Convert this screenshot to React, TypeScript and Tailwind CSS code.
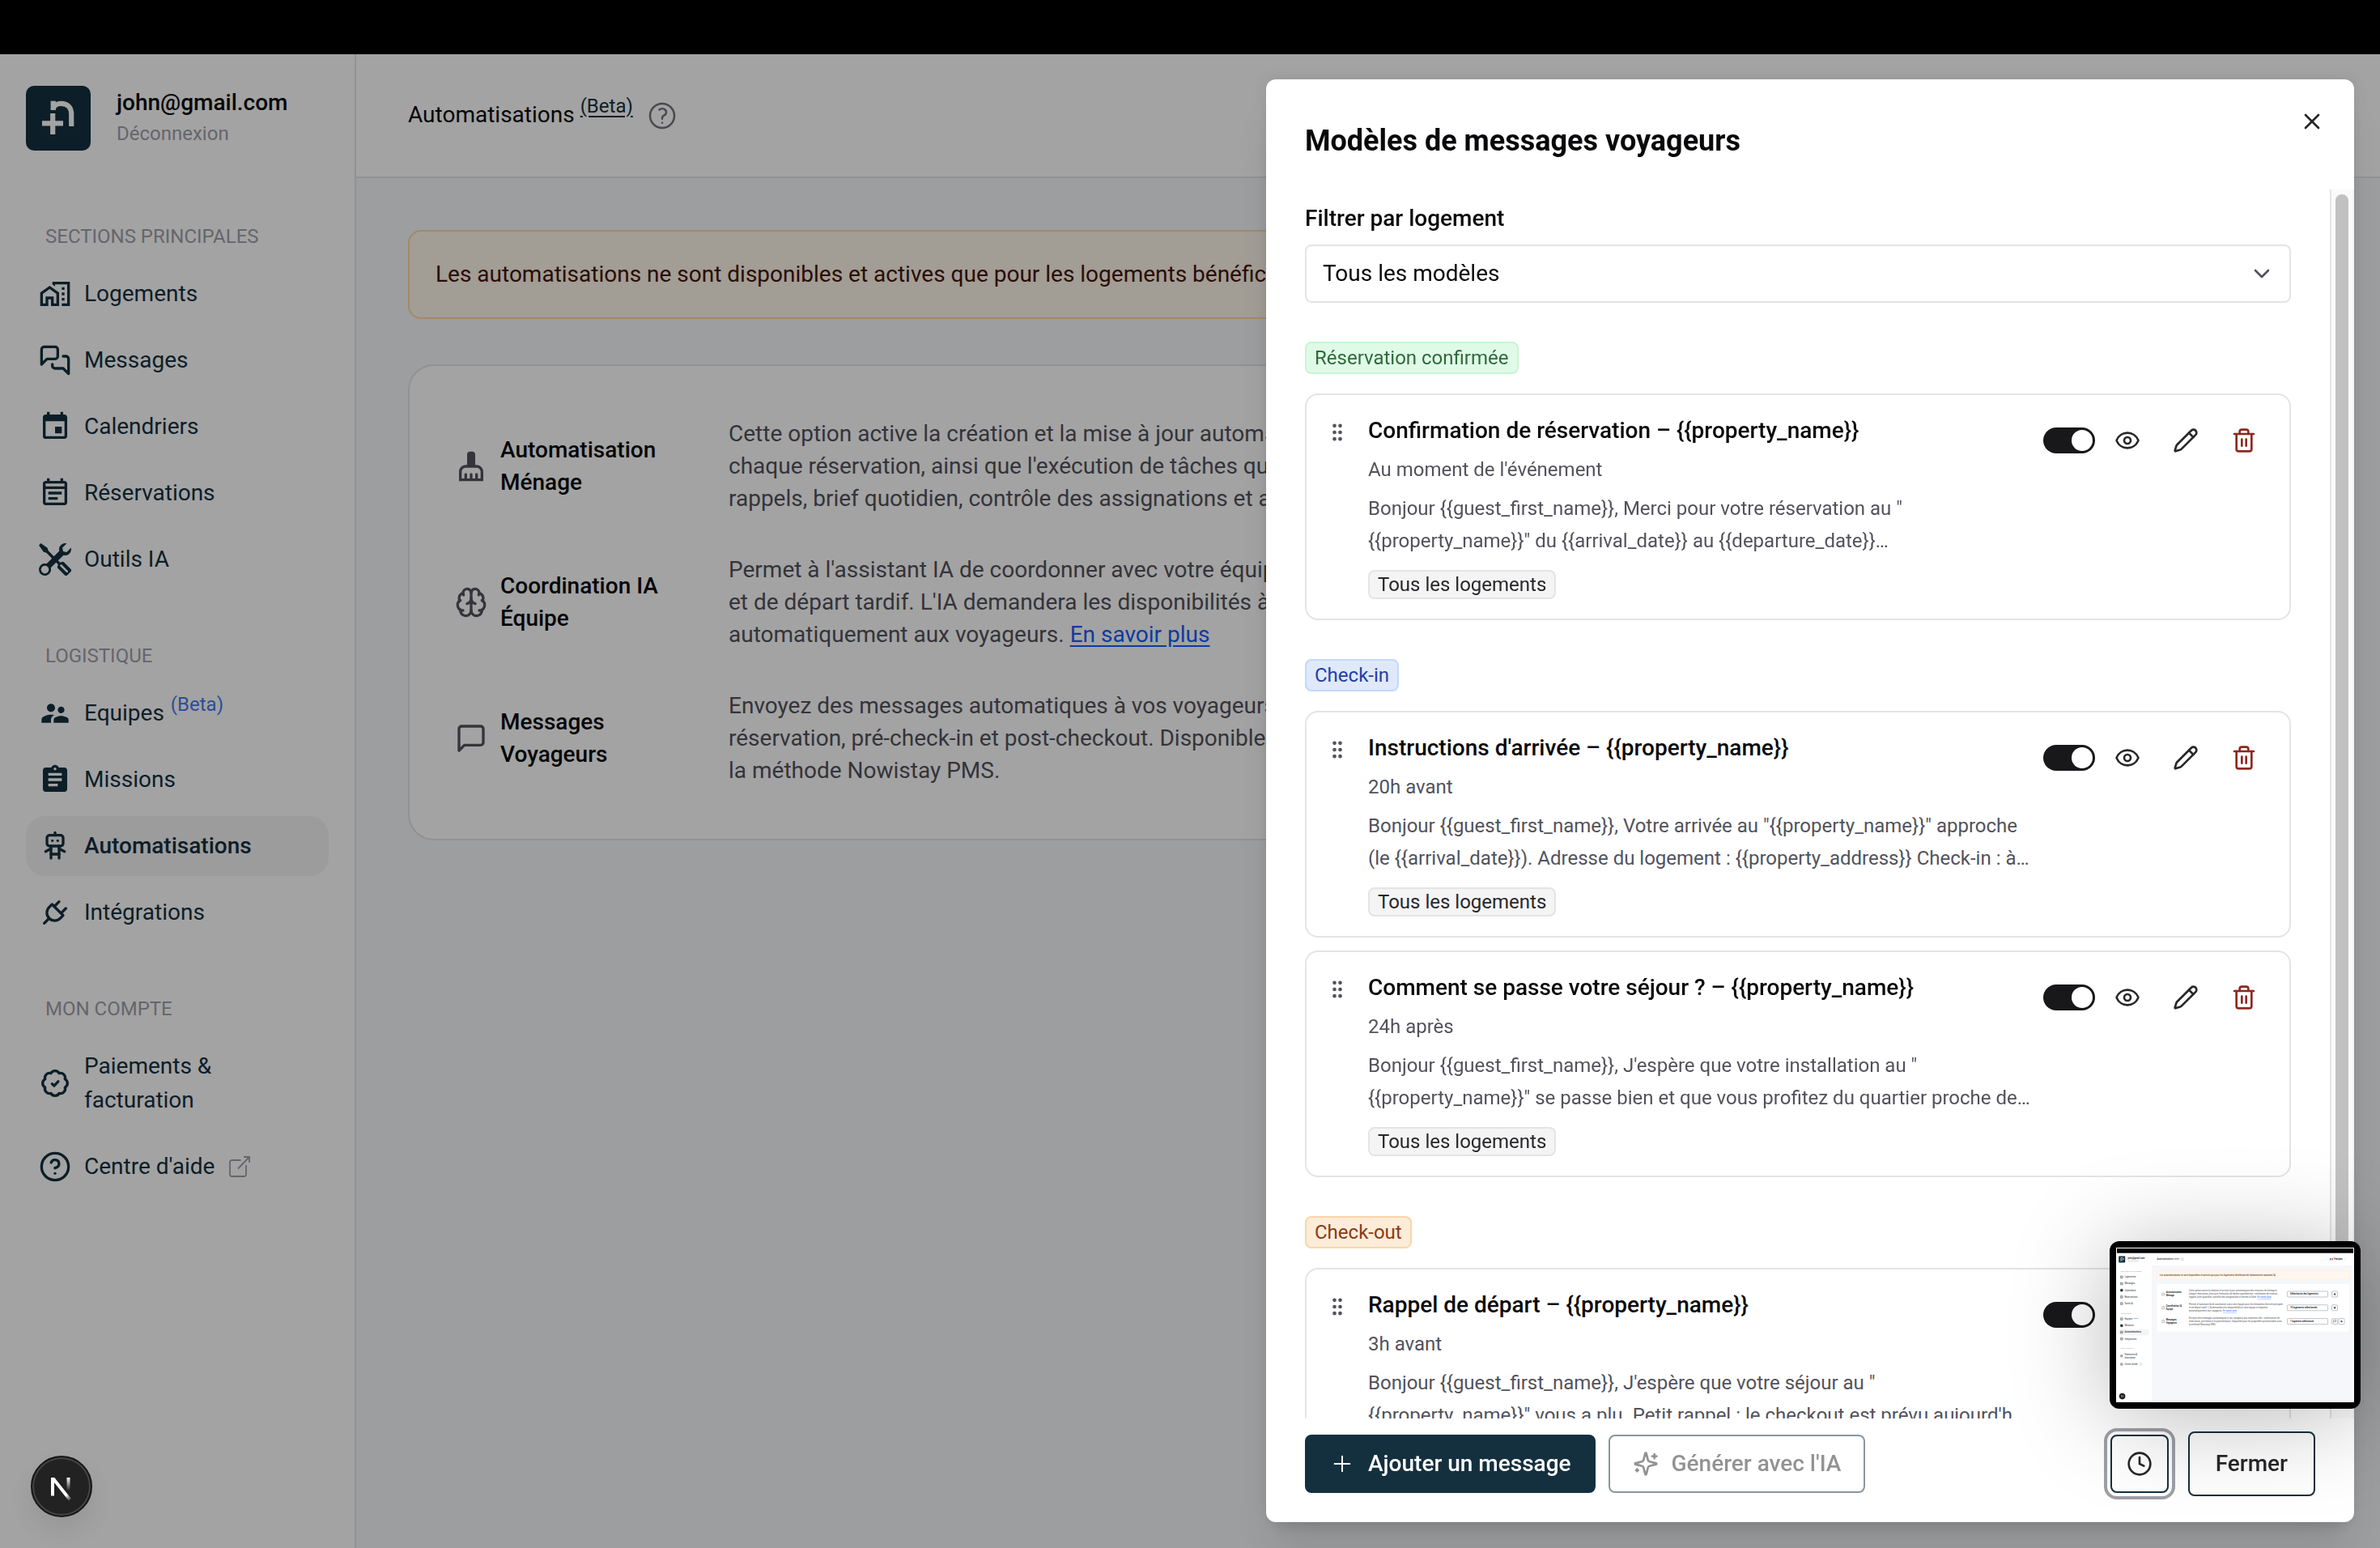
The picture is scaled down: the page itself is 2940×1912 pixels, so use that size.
import React from "react";
import {
  Brain,
  ChevronDown,
  CircleQuestionMark,
  Clock,
  Eye,
  GripVertical,
  Pencil,
  Plus,
  Trash2,
  X,
} from "lucide-react";
import {
  MdAssignment,
  MdEvent,
  MdOutlineEventNote,
  MdOutlineHomeWork,
  MdSupervisorAccount,
} from "react-icons/md";
import { BsTools } from "react-icons/bs";
import { TbPlug, TbRobot } from "react-icons/tb";
import { HiOutlineQuestionMarkCircle } from "react-icons/hi2";

type IconProps = { className?: string };

const stroke = {
  viewBox: "0 0 24 24",
  fill: "none",
  stroke: "currentColor",
  strokeWidth: 2,
  strokeLinecap: "round" as const,
  strokeLinejoin: "round" as const,
};

function ChatBubbles({ className }: IconProps) {
  return (
    <svg {...stroke} className={className} aria-hidden="true">
      <path d="M14 9a2 2 0 0 1-2 2H6l-4 4V4a2 2 0 0 1 2-2h8a2 2 0 0 1 2 2z" />
      <path d="M18 9h2a2 2 0 0 1 2 2v11l-4-4h-6a2 2 0 0 1-2-2v-1" />
    </svg>
  );
}

function ChatBubble({ className }: IconProps) {
  return (
    <svg {...stroke} className={className} aria-hidden="true">
      <path d="M21 15a2 2 0 0 1-2 2H7l-4 4V5a2 2 0 0 1 2-2h14a2 2 0 0 1 2 2z" />
    </svg>
  );
}

function ScallopedCheck({ className }: IconProps) {
  return (
    <svg {...stroke} className={className} aria-hidden="true">
      <path d="M19.39 8.94A3.500 3.500 0 0 1 19.39 15.06A3.500 3.500 0 0 1 15.06 19.39A3.500 3.500 0 0 1 8.94 19.39A3.500 3.500 0 0 1 4.61 15.06A3.500 3.500 0 0 1 4.61 8.94A3.500 3.500 0 0 1 8.94 4.61A3.500 3.500 0 0 1 15.06 4.61A3.500 3.500 0 0 1 19.39 8.94Z" />
      <path d="M9.800 12.400L11.300 13.900L14.300 10.700" />
    </svg>
  );
}

function Broom({ className }: IconProps) {
  return (
    <svg viewBox="0 0 24 24" fill="currentColor" className={className} aria-hidden="true">
      <path d="M16 11h-1V3c0-1.100-.9-2-2-2h-2c-1.100 0-2 .9-2 2v8H8c-2.760 0-5 2.240-5 5v7h18v-7c0-2.760-2.240-5-5-5zM19 21h-2v-3c0-.55-.45-1-1-1s-1 .45-1 1v3h-2v-3c0-.55-.45-1-1-1s-1 .45-1 1v3H9v-3c0-.55-.45-1-1-1s-1 .45-1 1v3H5v-5c0-1.650 1.350-3 3-3h8c1.650 0 3 1.350 3 3v5z" />
    </svg>
  );
}

function SparklesIcon({ className }: IconProps) {
  return (
    <svg {...stroke} className={className} aria-hidden="true">
      <path d="M9.937 15.5A2 2 0 0 0 8.5 14.063l-6.135-1.582a.5.5 0 0 1 0-.962L8.5 9.936A2 2 0 0 0 9.937 8.5l1.582-6.135a.5.5 0 0 1 .963 0L14.063 8.5A2 2 0 0 0 15.5 9.937l6.135 1.581a.5.5 0 0 1 0 .964L15.5 14.063a2 2 0 0 0-1.437 1.437l-1.582 6.135a.5.5 0 0 1-.963 0z" />
      <path d="M20 3v4M22 5h-4M4 17v2M5 18H3" />
    </svg>
  );
}

function OpenExternal({ className }: IconProps) {
  return (
    <svg
      viewBox="0 0 26 26"
      fill="none"
      stroke="currentColor"
      strokeWidth="1.8"
      className={className}
      aria-hidden="true"
    >
      <path d="M14.5 5H3.5A2.5 2.5 0 0 0 1 7.500V22.500A2.500 2.500 0 0 0 3.500 25H18.500A2.500 2.500 0 0 0 21 22.500V11" />
      <path d="M18 1h7v7M25 1 11 15.500" />
    </svg>
  );
}

function Logo({ className }: IconProps) {
  return (
    <svg viewBox="0 0 80 80" className={className} aria-hidden="true">
      <rect width="80" height="80" rx="10" fill="#14303f" />
      <g fill="none" stroke="#fff" strokeWidth="6.200">
        <path d="M33.700 18.700V29.500" />
        <path d="M33.700 30C33.700 25 38 21.800 43.500 21.800C51.500 21.800 56.200 27 56.200 35V50" />
        <path d="M33.200 34V60M20 46.300H46" />
      </g>
    </svg>
  );
}

type NavItem = {
  label: React.ReactNode;
  icon: React.ReactNode;
  active?: boolean;
  badge?: string;
  external?: boolean;
};

const navGroups: { title: string; items: NavItem[] }[] = [
  {
    title: "SECTIONS PRINCIPALES",
    items: [
      { label: "Logements", icon: <MdOutlineHomeWork className="size-10" /> },
      { label: "Messages", icon: <ChatBubbles className="size-10" /> },
      { label: "Calendriers", icon: <MdEvent className="size-10" /> },
      { label: "Réservations", icon: <MdOutlineEventNote className="size-10" /> },
      { label: "Outils IA", icon: <BsTools className="size-10" /> },
    ],
  },
  {
    title: "LOGISTIQUE",
    items: [
      { label: "Equipes", badge: "(Beta)", icon: <MdSupervisorAccount className="size-10" /> },
      { label: "Missions", icon: <MdAssignment className="size-10" /> },
      { label: "Automatisations", active: true, icon: <TbRobot className="size-10" /> },
      { label: "Intégrations", icon: <TbPlug className="size-10" /> },
    ],
  },
  {
    title: "MON COMPTE",
    items: [
      {
        label: (
          <>
            Paiements &amp;
            <br />
            facturation
          </>
        ),
        icon: <ScallopedCheck className="size-10" />,
      },
      { label: "Centre d'aide", external: true, icon: <CircleQuestionMark className="size-10" /> },
    ],
  },
];

function Sidebar() {
  return (
    <aside className="flex w-[440px] shrink-0 flex-col border-r-2 border-zinc-200 bg-white px-8 pt-[39px]">
      <div className="flex items-center gap-8">
        <Logo className="size-20 shrink-0" />
        <div className="flex flex-col items-start">
          <span className="text-[28px] leading-[38px] font-medium text-zinc-950">john@gmail.com</span>
          <button type="button" className="text-2xl leading-[38px] text-zinc-400">
            Déconnexion
          </button>
        </div>
      </div>
      <nav className="flex flex-col gap-16 pt-[88px]">
        {navGroups.map((group) => (
          <section key={group.title} className="flex flex-col gap-4">
            <h2 className="pl-6 text-2xl leading-9 text-zinc-400">{group.title}</h2>
            <ul className="flex flex-col gap-2">
              {group.items.map((item, i) => (
                <li key={i}>
                  <a
                    href="#"
                    className={
                      item.active
                        ? "flex items-center gap-4 rounded-3xl bg-zinc-100 p-4 font-medium text-[#14303f]"
                        : "flex items-center gap-4 rounded-3xl p-4 text-[#14303f]"
                    }
                  >
                    <span className="shrink-0">{item.icon}</span>
                    <span className="text-[28px] leading-[42px]">
                      {item.label}
                      {item.badge && (
                        <sup className="ml-2 text-2xl leading-none text-[#4a78f0]">{item.badge}</sup>
                      )}
                    </span>
                    {item.external && <OpenExternal className="ml-0.5 size-[26px] text-zinc-400" />}
                  </a>
                </li>
              ))}
            </ul>
          </section>
        ))}
      </nav>
    </aside>
  );
}

const automations = [
  {
    name: ["Automatisation", "Ménage"],
    icon: <Broom className="size-10" />,
    lines: [
      "Cette option active la création et la mise à jour automatiques des missions de ménage à",
      "chaque réservation, ainsi que l'exécution de tâches quotidiennes : notification de mission,",
      "rappels, brief quotidien, contrôle des assignations et alertes à l'hôte. ",
    ],
    link: true,
  },
  {
    name: ["Coordination IA", "Équipe"],
    icon: <Brain className="size-10" />,
    lines: [
      "Permet à l'assistant IA de coordonner avec votre équipe pour les demandes d'arrivée anticipée",
      "et de départ tardif. L'IA demandera les disponibilités à votre équipe et répondra",
      "automatiquement aux voyageurs. ",
    ],
    link: true,
  },
  {
    name: ["Messages", "Voyageurs"],
    icon: <ChatBubble className="size-10" />,
    lines: [
      "Envoyez des messages automatiques à vos voyageurs aux moments clés : confirmation de",
      "réservation, pré-check-in et post-checkout. Disponible pour les propriétés synchronisées avec",
      "la méthode Nowistay PMS.",
    ],
    link: false,
  },
];

function MainPage() {
  return (
    <main className="flex min-w-0 flex-1 flex-col bg-[#f5f7fa]">
      <header className="flex h-[153px] items-center border-b-2 border-zinc-200 bg-white px-16">
        <h1 className="pb-0.5 text-[28px] leading-10 text-zinc-950">
          Automatisations{" "}
          <sup className="text-2xl leading-none text-[#14303f] underline underline-offset-4">(Beta)</sup>
        </h1>
        <button type="button" aria-label="Aide" className="ml-4 text-zinc-500">
          <HiOutlineQuestionMarkCircle className="size-10" />
        </button>
      </header>
      <div className="flex flex-col gap-14 px-16 pt-16">
        <p className="rounded-2xl border-2 border-orange-200 bg-[#fdf6ea] px-8 py-[33px] text-[28px] leading-10 whitespace-nowrap text-orange-950">
          Les automatisations ne sont disponibles et actives que pour les logements bénéficiant de
          l'abonnement assistant IA.
        </p>
        <div className="flex flex-col gap-12 rounded-[32px] border-2 border-zinc-200 bg-white px-14 py-16">
          {automations.map((a) => (
            <div key={a.name[0]} className="flex items-center">
              <div className="flex w-[338px] shrink-0 items-center gap-4 text-zinc-600">
                {a.icon}
                <h2 className="text-[28px] leading-10 font-medium text-zinc-950">
                  {a.name[0]}
                  <br />
                  {a.name[1]}
                </h2>
              </div>
              <p className="text-[28px] leading-10 whitespace-nowrap text-zinc-600">
                {a.lines.map((line, i) => (
                  <React.Fragment key={i}>
                    {i > 0 && <br />}
                    {line}
                  </React.Fragment>
                ))}
                {a.link && (
                  <a href="#" className="text-blue-600 underline underline-offset-4">
                    En savoir plus
                  </a>
                )}
              </p>
            </div>
          ))}
        </div>
      </div>
    </main>
  );
}

type Template = { title: string; when: string; body: [string, string] };

const templateGroups: { label: string; chip: string; templates: Template[] }[] = [
  {
    label: "Réservation confirmée",
    chip: "border-[#c5f6d2] bg-[#e0fae8] text-[#2e6b38]",
    templates: [
      {
        title: "Confirmation de réservation – {{property_name}}",
        when: "Au moment de l'événement",
        body: [
          "Bonjour {{guest_first_name}}, Merci pour votre réservation au \"",
          "{{property_name}}\" du {{arrival_date}} au {{departure_date}}…",
        ],
      },
    ],
  },
  {
    label: "Check-in",
    chip: "border-[#c2d9fb] bg-[#dfe9fb] text-[#233da8]",
    templates: [
      {
        title: "Instructions d'arrivée – {{property_name}}",
        when: "20h avant",
        body: [
          "Bonjour {{guest_first_name}}, Votre arrivée au \"{{property_name}}\" approche",
          "(le {{arrival_date}}). Adresse du logement : {{property_address}} Check-in : à…",
        ],
      },
      {
        title: "Comment se passe votre séjour ? – {{property_name}}",
        when: "24h après",
        body: [
          "Bonjour {{guest_first_name}}, J'espère que votre installation au \"",
          "{{property_name}}\" se passe bien et que vous profitez du quartier proche de…",
        ],
      },
    ],
  },
  {
    label: "Check-out",
    chip: "border-[#f8d6ab] bg-[#fcecd8] text-[#8a3a16]",
    templates: [
      {
        title: "Rappel de départ – {{property_name}}",
        when: "3h avant",
        body: [
          "Bonjour {{guest_first_name}}, J'espère que votre séjour au \"",
          "{{property_name}}\" vous a plu. Petit rappel : le checkout est prévu aujourd'h…",
        ],
      },
    ],
  },
];

function TemplateCard({ template }: { template: Template }) {
  return (
    <article className="flex items-start rounded-2xl border-2 border-zinc-200 bg-white p-6">
      <button type="button" aria-label="Déplacer" className="mt-2 mr-6 text-zinc-600">
        <GripVertical className="size-7" />
      </button>
      <div className="flex min-w-0 flex-1 flex-col items-start gap-2">
        <h3 className="text-[28px] leading-10 font-medium text-zinc-950">{template.title}</h3>
        <p className="text-2xl leading-10 text-zinc-600">{template.when}</p>
        <p className="text-2xl leading-10 whitespace-nowrap text-zinc-600">
          {template.body[0]}
          <br />
          {template.body[1]}
        </p>
        <span className="mt-2 flex h-9 items-center rounded-lg border-2 border-zinc-200 bg-zinc-100 px-2.5 text-2xl leading-8 text-zinc-800">
          Tous les logements
        </span>
      </div>
      <div className="flex h-16 shrink-0 items-center gap-2">
        <input
          type="checkbox"
          role="switch"
          defaultChecked
          aria-label={`Activer ${template.title}`}
          className="flex h-8 w-16 appearance-none items-center justify-end rounded-full bg-zinc-900 p-[3px] before:size-[26px] before:rounded-full before:bg-white"
        />
        <button type="button" aria-label="Aperçu" className="flex size-16 items-center justify-center text-zinc-800">
          <Eye className="size-8" />
        </button>
        <button type="button" aria-label="Modifier" className="flex size-16 items-center justify-center text-zinc-800">
          <Pencil className="size-8" />
        </button>
        <button type="button" aria-label="Supprimer" className="flex size-16 items-center justify-center text-[#8f2820]">
          <Trash2 className="size-8" />
        </button>
      </div>
    </article>
  );
}

function TemplatesDialog() {
  return (
    <div
      role="dialog"
      aria-labelledby="dialog-title"
      className="fixed top-[98px] right-8 bottom-8 flex w-[1344px] flex-col rounded-xl bg-white shadow-[0_40px_50px_-10px_rgba(0,0,0,0.1),0_16px_20px_-12px_rgba(0,0,0,0.1),0_0_20px_rgba(0,0,0,0.08)]"
    >
      <div className="flex h-[136px] shrink-0 items-start justify-between pr-9 pl-12">
        <h2 id="dialog-title" className="pt-13 text-4xl leading-12 font-bold text-zinc-950">
          Modèles de messages voyageurs
        </h2>
        <button type="button" aria-label="Fermer la fenêtre" className="mt-9 text-zinc-800">
          <X className="size-8" />
        </button>
      </div>

      <div className="flex min-h-0 flex-1">
        <div className="flex min-w-0 flex-1 flex-col gap-12 overflow-hidden px-12 pt-4">
          <div className="flex shrink-0 flex-col gap-3">
            <label htmlFor="filter" className="text-[28px] leading-10 font-medium text-zinc-950">
              Filtrer par logement
            </label>
            <div className="relative">
              <select
                id="filter"
                className="h-[72px] w-full appearance-none rounded-lg border-2 border-zinc-200 bg-white px-5 text-[28px] text-zinc-950"
              >
                <option>Tous les modèles</option>
              </select>
              <ChevronDown className="pointer-events-none absolute top-5 right-5 size-8 text-zinc-600" />
            </div>
          </div>
          {templateGroups.map((group) => (
            <section key={group.label} className="flex shrink-0 flex-col items-start">
              <span
                className={`mb-6 flex h-10 items-center rounded-lg border-2 px-2.5 text-2xl leading-9 ${group.chip}`}
              >
                {group.label}
              </span>
              <div className="flex w-full flex-col gap-4">
                {group.templates.map((t) => (
                  <TemplateCard key={t.title} template={t} />
                ))}
              </div>
            </section>
          ))}
        </div>
        <div className="flex w-[30px] shrink-0 justify-center border-r-2 border-l-2 border-zinc-200 border-r-zinc-100 bg-[#fafafa] pt-1.5">
          <div className="h-[95%] w-4 rounded-full bg-[#c1c1c1]" />
        </div>
      </div>

      <div className="flex h-32 shrink-0 items-center gap-4 px-12 pb-4">
        <button
          type="button"
          className="flex h-[72px] items-center gap-4 rounded-lg border-2 border-[#14303f] bg-[#14303f] px-7 text-[28px] font-medium text-white"
        >
          <Plus className="size-8" strokeWidth={1.5} />
          Ajouter un message
        </button>
        <button
          type="button"
          disabled
          className="flex h-[72px] items-center gap-4 rounded-lg border-2 border-[#14303f] px-7 text-[28px] font-medium text-zinc-800 opacity-50"
        >
          <SparklesIcon className="size-8" />
          Générer avec l'IA
        </button>
        <div className="ml-auto flex items-center gap-6">
          <button
            type="button"
            aria-label="Historique"
            className="flex size-[72px] items-center justify-center rounded-lg border-2 border-[#14303f] text-zinc-800 ring-4 ring-zinc-400 ring-offset-4"
          >
            <Clock className="size-8" />
          </button>
          <button
            type="button"
            className="h-20 rounded-lg border-2 border-[#14303f] px-8 text-[28px] font-medium text-zinc-800"
          >
            Fermer
          </button>
        </div>
      </div>
    </div>
  );
}

const thumbNav: [string, number][] = [
  ["Logements", 372],
  ["Messages", 454],
  ["Calendriers", 536],
  ["Réservations", 618],
  ["Outils IA", 700],
  ["Equipes", 890],
  ["Missions", 972],
  ["Automatisations", 1054],
  ["Intégrations", 1136],
  ["Paiements &", 1326],
  ["facturation", 1368],
  ["Centre d'aide", 1450],
];

const thumbSelects: [string, number][] = [
  ["Sélectionner des logements", 575],
  ["10 logements sélectionnés", 743],
  ["1 logement sélectionné", 911],
];

/* Miniature of the automations page, shown as a floating capture. */
function CapturePreview() {
  return (
    <div className="fixed right-6 bottom-[172px] rounded-xl bg-black p-2 shadow-[0_10px_120px_rgba(0,0,0,0.28)]">
      <svg viewBox="0 0 2940 1912" className="block w-[294px]" fontFamily="Roboto, sans-serif" fontSize="28" aria-hidden="true">
        <rect width="2940" height="1912" fill="#fff" />
        <rect x="10" y="10" width="2920" height="57" fill="#000" />
        <rect x="440" y="220" width="2480" height="1682" fill="#f5f7fa" />
        <rect x="32" y="106" width="80" height="80" rx="8" fill="#14303f" />
        <path d="M60 168V126H78a12 12 0 0 1 0 26H62" fill="none" stroke="#fff" strokeWidth="7" />
        <text x="144" y="136" fontWeight="500">john@gmail.com</text>
        <text x="144" y="174" fontSize="24" fill="#a1a1aa">Déconnexion</text>
        <rect x="32" y="1008" width="374" height="74" rx="24" fill="#f4f4f5" />
        <g fontSize="24" fill="#a1a1aa">
          <text x="56" y="300">SECTIONS PRINCIPALES</text>
          <text x="56" y="819">LOGISTIQUE</text>
          <text x="56" y="1255">MON COMPTE</text>
        </g>
        <text x="212" y="876" fontSize="24" fill="#2563eb">(Beta)</text>
        {thumbNav.map(([label, y]) => (
          <text key={label} x="104" y={y} fill="#14303f" fontWeight={label === "Automatisations" ? 500 : 400}>
            {label}
          </text>
        ))}
        <g fill="#14303f" stroke="#14303f" strokeWidth="4">
          {[363, 445, 527, 609, 691, 881, 963, 1045, 1127, 1338, 1441].map((y, i) => (
            <rect key={y} x="54" y={y - 14} width="28" height="28" rx={i > 8 ? 14 : 4} fillOpacity={i === 2 || i === 6 ? 1 : 0.25} />
          ))}
        </g>
        <path d="M318 1428h-24v26h22v-14M306 1442l16-16" fill="none" stroke="#a1a1aa" strokeWidth="3" />
        <text x="504" y="151">Automatisations</text>
        <text x="718" y="138" fontSize="24" fill="#14303f" textDecoration="underline">(Beta)</text>
        <circle cx="818" cy="142" r="15" fill="none" stroke="#71717a" strokeWidth="3" />
        <rect x="2642" y="130" width="12" height="24" fill="#1d3fae" />
        <rect x="2666" y="130" width="12" height="24" fill="#e0342c" />
        <text x="2692" y="151" fontWeight="500">Français</text>
        <path d="M2824 136l8 8 8-8" fill="none" stroke="#71717a" strokeWidth="3" />
        <rect x="504" y="284" width="2374" height="110" rx="16" fill="#fff7ed" stroke="#ffedd5" strokeWidth="6" />
        <text x="538" y="348" fill="#431407">
          Les automatisations ne sont disponibles et actives que pour les logements bénéficiant de l'abonnement assistant IA.
        </text>
        <rect x="504" y="450" width="2374" height="588" rx="32" fill="#fff" />
        {automations.map((a, i) => (
          <g key={a.name[0]}>
            <rect x="568" y={560 + i * 168} width="28" height="30" rx="6" fill="none" stroke="#52525b" strokeWidth="4" />
            <text x="618" y={565 + i * 168} fontWeight="500">{a.name[0]}</text>
            <text x="618" y={605 + i * 168} fontWeight="500">{a.name[1]}</text>
            {a.lines.map((line, j) => (
              <text key={j} x="900" y={545 + i * 168 + j * 40} fill="#52525b">
                {line}
                {a.link && j === 2 && (
                  <tspan fill="#2563eb" textDecoration="underline">{" En savoir plus"}</tspan>
                )}
              </text>
            ))}
          </g>
        ))}
        {thumbSelects.map(([label, y]) => (
          <g key={label}>
            <rect x="2116" y={y - 35} width="500" height="70" rx="8" fill="#fff" stroke="#5d707b" strokeWidth="4" />
            <text x="2150" y={y + 10} fontWeight="500">{label}</text>
            <rect x="2666" y={y - 35} width="70" height="70" rx="8" fill="#fff" stroke="#5d707b" strokeWidth="4" />
            {y === 911 ? (
              <>
                <path d="M2687 926v-32h28v22h-20z" fill="none" stroke="#27272a" strokeWidth="4" />
                <rect x="2750" y={y - 35} width="70" height="70" rx="8" fill="#fff" stroke="#5d707b" strokeWidth="4" />
                <circle cx="2785" cy={y} r="12" fill="#52525b" />
              </>
            ) : (
              <circle cx="2701" cy={y} r="12" fill="#52525b" />
            )}
          </g>
        ))}
        <circle cx="76" cy="1836" r="38" fill="#222" />
        <path d="M66 1848V1824L86 1850M86 1824V1840" fill="none" stroke="#fff" strokeWidth="4" />
      </svg>
    </div>
  );
}

function DevBadge() {
  return (
    <button
      type="button"
      aria-label="Outils de développement"
      className="fixed bottom-[38px] left-[38px] flex size-[76px] items-center justify-center rounded-full border-2 border-[#171717] bg-[#222] shadow-[0_16px_32px_rgba(0,0,0,0.08)] inset-ring-2 inset-ring-[#454545]"
    >
      <svg viewBox="0 0 76 76" className="size-[76px] shrink-0" aria-hidden="true">
        <defs>
          <linearGradient id="diag" gradientUnits="userSpaceOnUse" x1="40" y1="40" x2="51" y2="54">
            <stop offset="0" stopColor="#fff" />
            <stop offset="0.500" stopColor="#fff" />
            <stop offset="1" stopColor="#fff" stopOpacity="0" />
          </linearGradient>
          <linearGradient id="stem" gradientUnits="userSpaceOnUse" x1="0" y1="27" x2="0" y2="43">
            <stop offset="0" stopColor="#fff" />
            <stop offset="1" stopColor="#fff" stopOpacity="0" />
          </linearGradient>
        </defs>
        <g fill="none" strokeWidth="4">
          <path d="M27 49.500V27" stroke="#fff" />
          <path d="M27.500 28L48.500 54.500" stroke="url(#diag)" />
          <path d="M46.500 27V43" stroke="url(#stem)" />
        </g>
      </svg>
    </button>
  );
}

export default function App() {
  return (
    <div className="flex h-screen flex-col overflow-hidden bg-black font-['Roboto',sans-serif]">
      <div className="h-[67px] shrink-0 bg-black" />
      <div className="relative flex min-h-0 flex-1">
        <Sidebar />
        <MainPage />
        <div className="absolute inset-0 bg-black/36" />
      </div>
      <TemplatesDialog />
      <CapturePreview />
      <DevBadge />
    </div>
  );
}
